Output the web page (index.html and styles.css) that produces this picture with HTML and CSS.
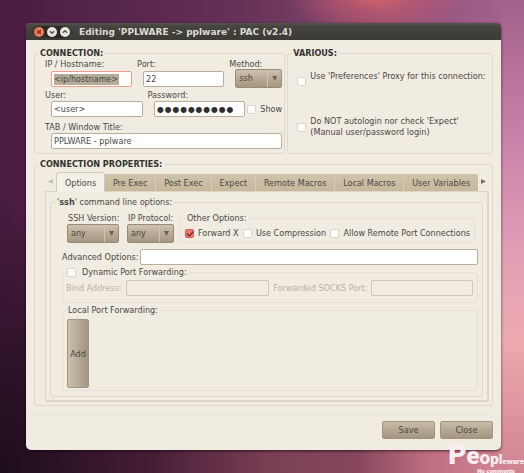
FILE: index.html
```html
<!DOCTYPE html>
<html lang="en">
<head>
<meta charset="utf-8">
<title>Editing 'PPLWARE -> pplware' : PAC (v2.4)</title>
<link rel="stylesheet" href="styles.css">
</head>
<body>
<main class="window">
  <header class="titlebar">
    <div class="controls">
      <button class="control control-close" aria-label="Close window"><svg viewBox="0 0 10 10"><path d="M3.2 3.2l3.6 3.6M6.8 3.2l-3.6 3.6"/></svg></button>
      <button class="control" aria-label="Minimize"><svg viewBox="0 0 10 10"><path d="M2.8 4.2L5 6.2l2.200-2"/></svg></button>
      <button class="control" aria-label="Maximize"><svg viewBox="0 0 10 10"><path d="M2.800 5.800L5 3.800l2.200 2"/></svg></button>
    </div>
    <h1 class="title">Editing 'PPLWARE -&gt; pplware' : PAC (v2.4)</h1>
  </header>

  <form class="content">
    <div class="top">
      <fieldset class="group connection">
        <legend class="heading">CONNECTION:</legend>
        <div class="row row-host">
          <div class="field"><label for="host">IP / Hostname:</label><input class="text focused" id="host" type="text" value="&lt;ip/hostname&gt;"></div>
          <div class="field"><label for="port">Port:</label><input class="text" id="port" type="text" value="22"></div>
          <div class="field"><label for="method">Method:</label><span class="combo"><select id="method"><option>ssh</option></select></span></div>
        </div>
        <div class="row row-user">
          <div class="field"><label for="user">User:</label><input class="text" id="user" type="text" value="&lt;user&gt;"></div>
          <div class="field"><label for="pass">Password:</label><input class="text password" id="pass" type="password" value="0123456789"></div>
          <label class="check show"><input type="checkbox">Show</label>
        </div>
        <div class="row row-title">
          <div class="field"><label for="tab-title">TAB / Window Title:</label><input class="text" id="tab-title" type="text" value="PPLWARE - pplware"></div>
        </div>
      </fieldset>

      <fieldset class="group various">
        <legend class="heading">VARIOUS:</legend>
        <label class="check"><input type="checkbox"><span class="two-line">Use 'Preferences' Proxy for this connection:</span></label>
        <label class="check"><input type="checkbox"><span class="two-line">Do NOT autologin nor check 'Expect'<br>(Manual user/password login)</span></label>
      </fieldset>
    </div>

    <fieldset class="group properties">
      <legend class="heading">CONNECTION PROPERTIES:</legend>
      <div class="tabbar">
        <button type="button" class="scroll scroll-left" aria-label="Previous tab"></button>
        <div class="tabs" role="tablist">
          <button type="button" class="tab active" role="tab" aria-selected="true">Options</button>
          <button type="button" class="tab" role="tab">Pre Exec</button>
          <button type="button" class="tab" role="tab">Post Exec</button>
          <button type="button" class="tab" role="tab">Expect</button>
          <button type="button" class="tab" role="tab">Remote Macros</button>
          <button type="button" class="tab" role="tab">Local Macros</button>
          <button type="button" class="tab" role="tab">User Variables</button>
        </div>
        <button type="button" class="scroll scroll-right" aria-label="Next tab"></button>
      </div>
      <div class="page" role="tabpanel">
        <fieldset class="group ssh">
          <legend>'<b>ssh</b>' command line options:</legend>
          <div class="options">
            <div class="option version"><label for="ssh-version">SSH Version:</label><span class="combo"><select id="ssh-version"><option>any</option></select></span></div>
            <div class="option protocol"><label for="protocol">IP Protocol:</label><span class="combo"><select id="protocol"><option>any</option></select></span></div>
            <fieldset class="group light others">
              <legend>Other Options:</legend>
              <label class="check"><input type="checkbox" checked>Forward X</label>
              <label class="check"><input type="checkbox">Use Compression</label>
              <label class="check"><input type="checkbox">Allow Remote Port Connections</label>
            </fieldset>
          </div>
          <div class="advanced"><label for="advanced">Advanced Options:</label><input class="text" id="advanced" type="text"></div>
          <fieldset class="group light dynamic">
            <legend><label class="check"><input type="checkbox">Dynamic Port Forwarding:</label></legend>
            <label for="bind">Bind Address:</label><input class="text bind" id="bind" type="text" disabled>
            <label for="socks">Forwarded SOCKS Port:</label><input class="text socks" id="socks" type="text" disabled>
          </fieldset>
          <fieldset class="group light local">
            <legend>Local Port Forwarding:</legend>
            <button type="button" class="button add">Add</button>
          </fieldset>
        </fieldset>
      </div>
    </fieldset>

    <footer class="actions">
      <button type="button" class="button">Save</button>
      <button type="button" class="button">Close</button>
    </footer>
  </form>
</main>
<div class="watermark">
  <div class="brand"><span class="s1">P</span><span class="s2">e</span><span class="s3">o</span><span class="s4">p</span><span class="s5">l</span><span class="s6">eware</span></div>
  <div class="tagline">No comments</div>
</div>
</body>
</html>
```
FILE: styles.css
```css
* { box-sizing: border-box; }

body {
  margin: 0;
  min-height: 100vh;
  padding: 23px 23px 24px 26px;
  display: flex;
  position: relative;
  overflow: hidden;
  font: 9px/10px "DejaVu Sans Condensed", "DejaVu Sans", sans-serif;
  font-stretch: condensed;
  color: #4a4843;
  background:
    radial-gradient(ellipse 90px 50px at 72% -2%, #e0686a 0%, rgba(200, 90, 110, 0.6) 45%, rgba(170, 90, 130, 0) 100%),
    radial-gradient(ellipse 170px 280px at 0 100%, rgba(20, 10, 18, 0.85) 0%, rgba(20, 10, 18, 0) 100%),
    linear-gradient(to bottom, #a2608c 0%, #cc86ac 32%, #e3a0b4 55%, #eda9af 72%, #cf8390 100%) right / 23px 100% no-repeat,
    linear-gradient(to right, #4a1c42 0%, #5e2b54 35%, #6a3559 50%, #8f5078 75%, #a2608c 95%) top / 100% 50% no-repeat,
    linear-gradient(to right, #4a1c42 0%, #4a2038 30%, #7b4055 52%, #86465c 68%, #c06f80 82%, #cf8390 95%);
}

input, select, button { font: inherit; color: inherit; margin: 0; }
fieldset, legend, h1 { margin: 0; padding: 0; }
fieldset { min-width: 0; }
label { white-space: nowrap; }

.window {
  flex: 1;
  min-width: 0;
  display: flex;
  flex-direction: column;
  border-radius: 5px;
  background: #f0ece2;
  box-shadow: 0 1px 3px rgba(20, 0, 15, 0.7);
}

.titlebar {
  display: flex;
  align-items: center;
  gap: 8px;
  height: 17px;
  padding: 0 7px;
  border-radius: 4px 4px 0 0;
  background: linear-gradient(#55534d, #45443f 20%, #3b3a36);
}
.controls {
  display: flex;
  align-items: center;
  gap: 3px;
  height: 12px;
  padding: 0 1px;
  border-radius: 6px;
  background: #2b2a27;
}
.control {
  width: 10px;
  height: 10px;
  padding: 0;
  border: 0;
  border-radius: 50%;
  background: #e9e6df;
}
.control svg { display: block; fill: none; stroke: #55534c; stroke-width: 1.4; }
.control-close { background: #ee7f57; }
.control-close svg { stroke: #7c321c; }
.title { font: bold 9px/12px "DejaVu Sans", sans-serif; color: #dfdbd2; white-space: nowrap; }

.content {
  flex: 1;
  display: flex;
  flex-direction: column;
  padding: 7px 8px 11px;
}
.top { display: flex; gap: 2px; }

.group { border: 1px solid #dfd9cc; border-radius: 3px; }
.group.light { border-color: #e7e1d5; }
.group > legend { margin-left: -7px; padding: 0 2px; line-height: 12px; }
.heading { font-weight: bold; color: #33322e; }

.connection { flex: 251; padding: 0 2px 4px 10px; }
.various { flex: 205; display: grid; grid-template-rows: 1fr 1fr; padding: 0 0 3px 10px; }

.row { display: grid; column-gap: 5px; }
.row-host { grid-template-columns: 1fr 1fr 53px; grid-template-rows: 30px; }
.row-user { grid-template-columns: 1fr 1fr 32px; grid-template-rows: 28px; margin-top: 1px; }
.row-title { margin-top: 4px; }
.field { display: flex; flex-direction: column; min-width: 0; }
.field .text { margin: 1px 0 0 6px; min-width: 0; }
.row-host .text { margin-top: 2px; }
.field .combo { margin-left: 6px; }

.text {
  height: 16px;
  padding: 0 2px;
  border: 1px solid #b9ae9b;
  border-radius: 2px;
  background: #fff;
  outline: 0;
}
.text:disabled { background: transparent; border-color: #cfc6b5; }
.focused {
  border-color: #ee9a8c;
  background: linear-gradient(#b5ab99, #b5ab99) 2px center / 65px 11px no-repeat #fff;
}
.password { padding-top: 2px; font-family: "Liberation Sans", sans-serif; font-size: 22px; font-stretch: normal; line-height: 12px; color: #2f2e2b; }

.combo { position: relative; display: block; height: 19px; }
.combo select {
  width: 100%;
  height: 100%;
  padding: 0 16px 1px 3px;
  appearance: none;
  border: 1px solid #998b75;
  border-radius: 2px;
  background: linear-gradient(#cdc2b1, #b8ab96 50%, #a5967f);
}
.combo::before {
  content: "";
  position: absolute;
  top: 1px;
  bottom: 1px;
  right: 14px;
  width: 1px;
  background: #cfc4b3;
}
.combo::after {
  content: "";
  position: absolute;
  top: 7px;
  right: 5px;
  width: 5px;
  height: 5px;
  background: #6b6150;
  clip-path: polygon(0 0, 100% 0, 50% 100%);
}

.check { display: flex; align-items: center; gap: 5px; }
.check input {
  flex: none;
  width: 7px;
  height: 7px;
  appearance: none;
  border-radius: 1px;
  background: #fff;
  box-shadow: 0 0 0 1px #dcd5c8;
}
.check input:checked {
  background: #f0776a;
  box-shadow: 0 0 0 1px #d9604f;
  position: relative;
}
.check input:checked::after {
  content: "";
  position: absolute;
  left: 2px;
  top: 0;
  width: 3px;
  height: 5px;
  border: solid #3b211d;
  border-width: 0 1px 1px 0;
  transform: rotate(40deg);
}
.show { margin: 11px 0 0 -2px; height: 16px; }
.two-line { min-height: 22px; line-height: 11px; }

.properties {
  flex: 1;
  display: flex;
  flex-direction: column;
  margin-top: 4px;
  padding: 2px 3px 3px 10px;
}
.tabbar { display: flex; align-items: center; height: 19px; }
.tabs { flex: 1; display: flex; align-items: flex-end; height: 100%; }
.tab {
  flex: 1 1 auto;
  height: 17px;
  padding: 0 5px;
  border: 0;
  border-right: 1px solid #d8cdb8;
  background: linear-gradient(#cfc4ab, #c5b89c);
  white-space: nowrap;
}
.tab:last-child { border-right: 0; border-radius: 0 2px 0 0; }
.tab.active {
  height: 20px;
  margin-bottom: -1px;
  border: 1px solid #d3cab9;
  border-bottom: 0;
  border-radius: 3px 3px 0 0;
  background: #f3f0e8;
  position: relative;
}
.scroll { width: 11px; height: 19px; padding: 0; border: 0; background: none; }
.scroll::after { content: ""; display: block; width: 5px; height: 5px; margin: 0 auto; background: #77705f; clip-path: polygon(0 0, 100% 50%, 0 100%); }
.scroll-left::after { background: #c9c0ae; clip-path: polygon(100% 0, 0 50%, 100% 100%); }

.page {
  flex: 1;
  display: flex;
  padding: 4px 4px 3px;
  border: 2px solid #ded6c6;
  border-width: 1px 2px 2px 1px;
  border-radius: 0 2px 2px 2px;
}
.ssh { flex: 1; display: flex; flex-direction: column; padding: 4px 4px 5px 11px; }
.options { display: flex; padding: 0 3px 0 5px; }
.option { margin-right: 8px; }
.option label { display: block; height: 12px; line-height: 12px; padding-left: 1px; overflow: hidden; }
.version { width: 52px; }
.protocol { width: 47px; margin-right: 5px; }
.others { flex: 1; display: flex; align-items: center; justify-content: space-between; padding: 0 4px 0 6px; }
.advanced { display: flex; align-items: center; margin-top: 6px; }
.advanced .text { flex: 1; min-width: 0; margin-left: 1px; }
.dynamic { display: flex; align-items: center; gap: 4px; height: 37px; margin-top: 1px; padding: 2px 4px 0 3px; color: #bcb19e; }
.group.dynamic > legend { margin-left: 0; color: #4a4843; }
.dynamic legend .check { gap: 7px; line-height: 12px; }
.bind { flex: 144; min-width: 0; }
.socks { flex: 100; min-width: 0; }
.local { flex: 1; display: flex; margin-top: 1px; padding: 3px 4px 2px; }
.group.local > legend, .group.others > legend { margin-left: -1px; }

.button {
  width: 53px;
  height: 18px;
  padding: 0;
  border: 1px solid #a3967f;
  border-radius: 2px;
  background: linear-gradient(#c9bdab, #b5a892 50%, #a39580);
}
.add { width: 22px; height: 100%; min-height: 69px; background: linear-gradient(to right, #cbc0ae, #a39580); }

.actions {
  display: flex;
  justify-content: flex-end;
  gap: 5px;
  margin-top: 8px;
  padding-top: 6px;
  border-top: 1px solid #e8e3d7;
}

.watermark {
  position: absolute;
  right: 0;
  bottom: 0;
  color: #fbeef1;
  font-family: Roboto, sans-serif;
  font-weight: 900;
  font-stretch: normal;
  white-space: nowrap;
}
.brand { line-height: 12px; }
.s1 { font-size: 28px; }
.s2 { font-size: 24px; }
.s3 { font-size: 19px; }
.s4 { font-size: 15px; }
.s5 { font-size: 13px; }
.s6 { font-size: 8px; }
.tagline { padding-left: 29px; font-size: 6px; line-height: 6px; }
```
